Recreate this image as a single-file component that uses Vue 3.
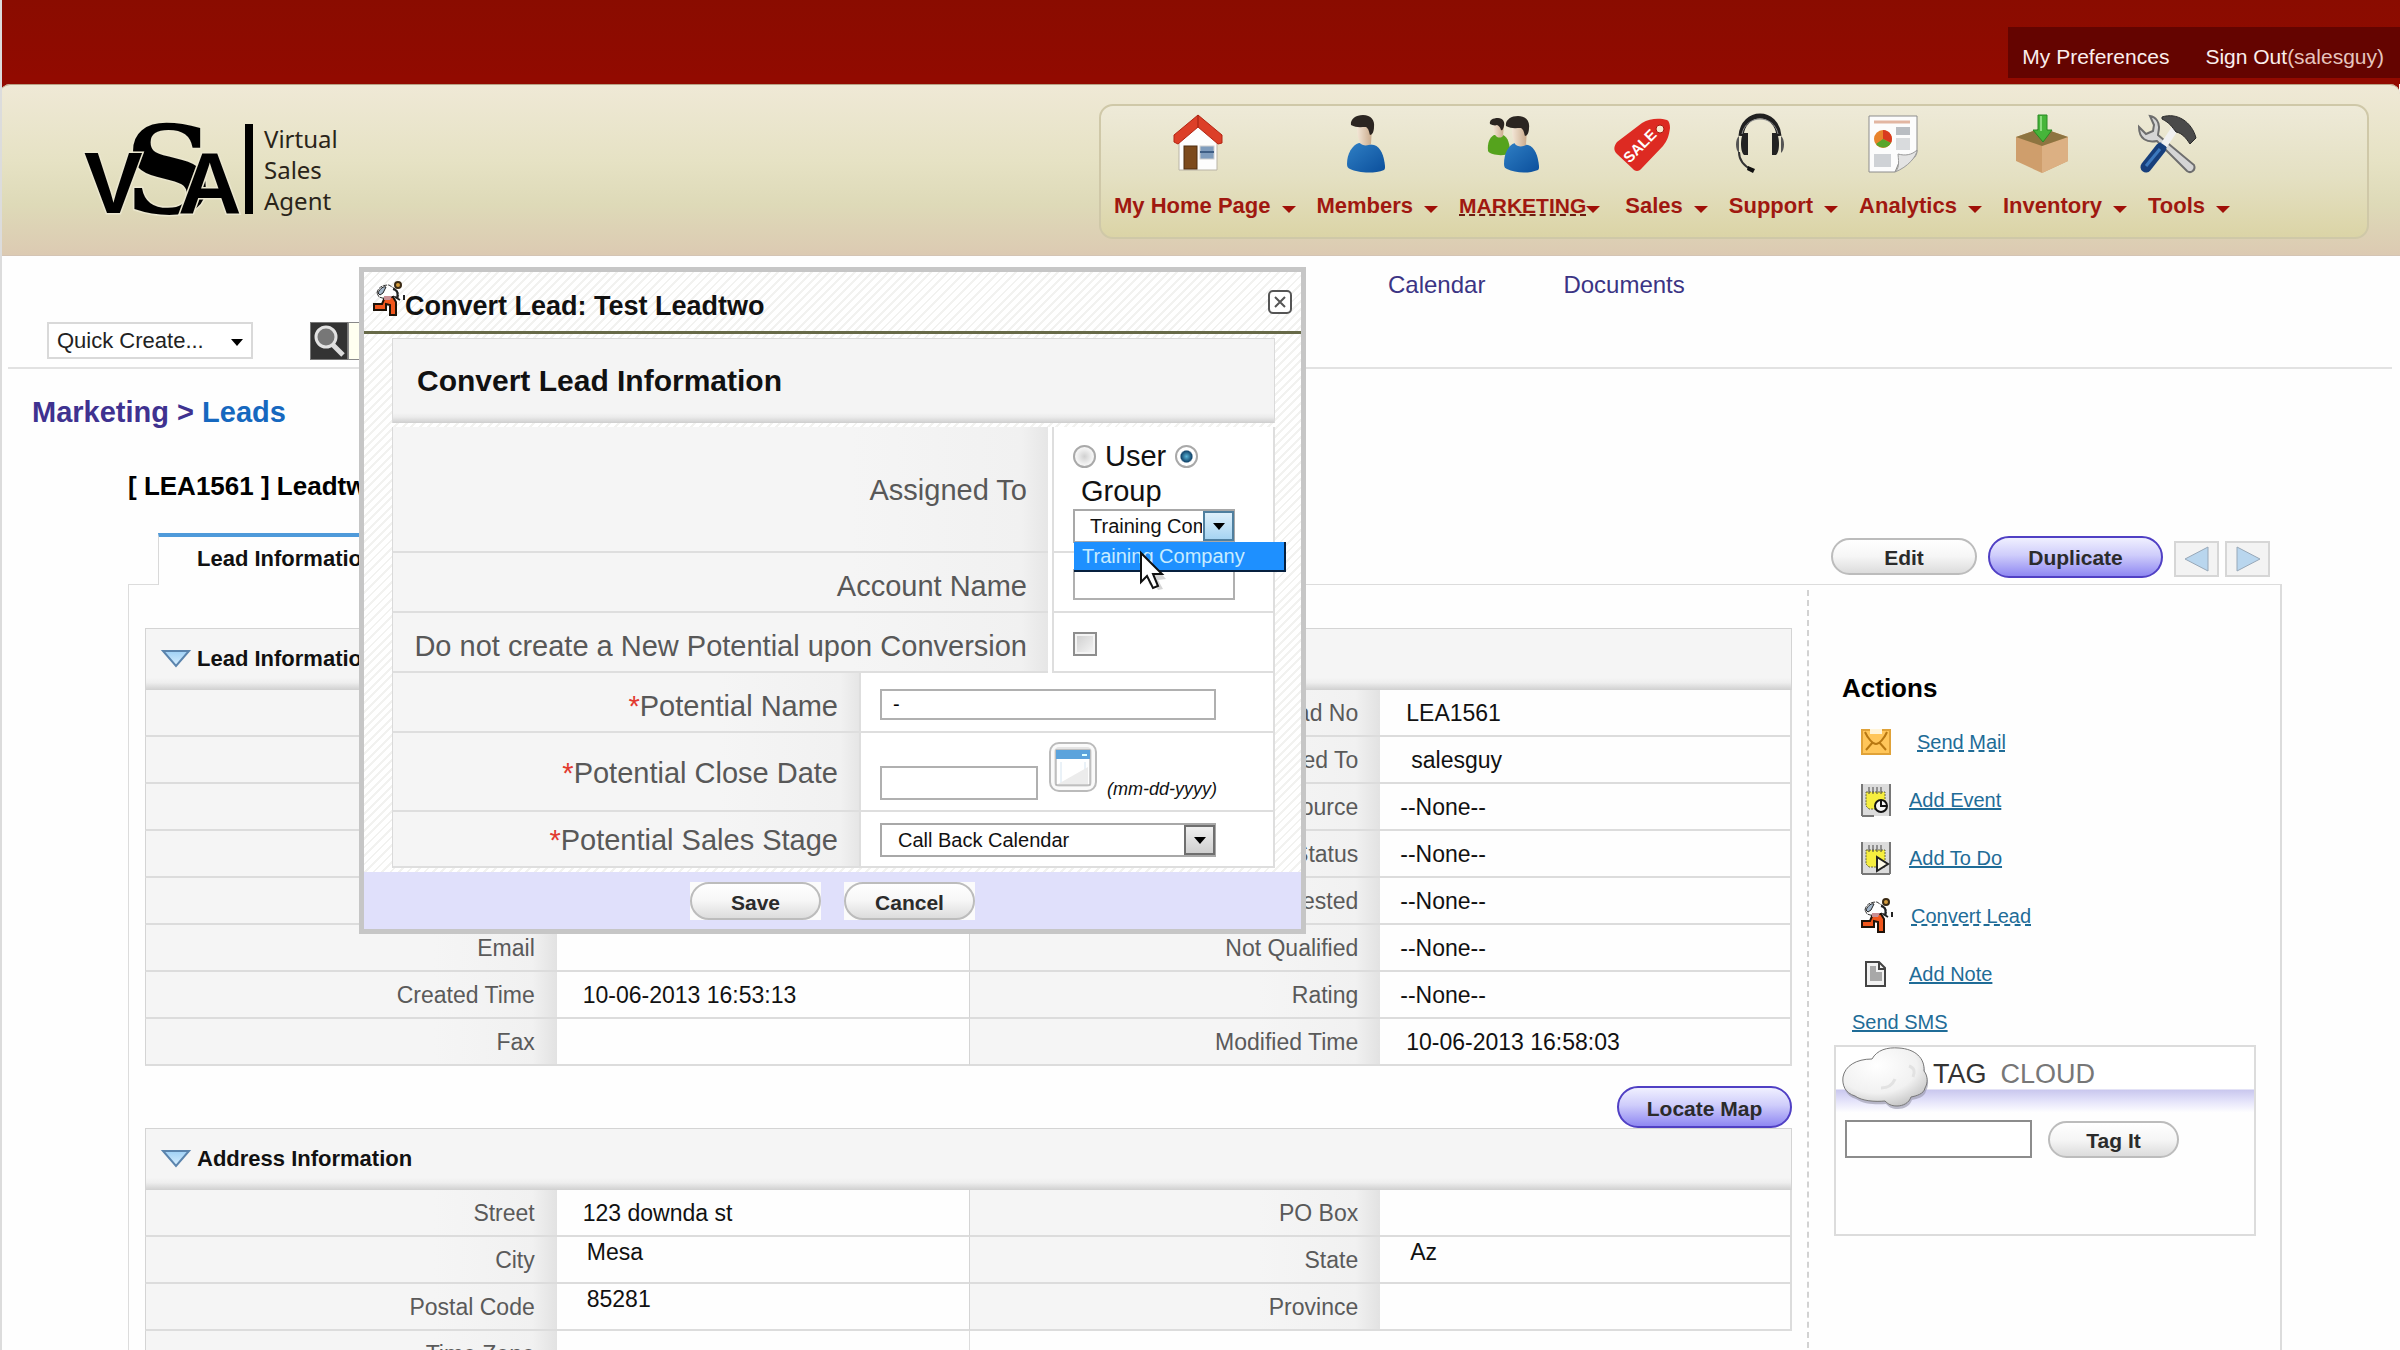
<script setup>
import { ref } from 'vue'

const navItems = [
  { label: 'My Home Page', icon: 'home', w: 50, shift: 7 },
  { label: 'Members', icon: 'member', w: 40, shift: 11 },
  { label: 'MARKETING', icon: 'members', w: 54, shift: 18, current: true },
  { label: 'Sales', icon: 'sale', w: 56, shift: 25 },
  { label: 'Support', icon: 'headset', w: 52, shift: 23 },
  { label: 'Analytics', icon: 'report', w: 50, shift: 28 },
  { label: 'Inventory', icon: 'box', w: 54, shift: 23 },
  { label: 'Tools', icon: 'tools', w: 60, shift: 22 }
]

const leadRows = [
  ['', '', 'Lead No', 'LEA1561'],
  ['', '', 'Assigned To', 'salesguy', 'inset'],
  ['', '', 'Lead Source', '--None--', 'outset'],
  ['', '', 'Lead Status', '--None--', 'outset'],
  ['', '', 'Interested', '--None--', 'outset'],
  ['Email', '', 'Not Qualified', '--None--', 'outset'],
  ['Created Time', '10-06-2013 16:53:13', 'Rating', '--None--', 'outset'],
  ['Fax', '', 'Modified Time', '10-06-2013 16:58:03']
]

const addressRows = [
  ['Street', '123 downda st', 'PO Box', ''],
  ['City', 'Mesa', 'State', 'Az', 'raised'],
  ['Postal Code', '85281', 'Province', '', 'raised']
]

const actions = [
  { label: 'Send Mail', icon: 'mail', dashed: true, wide: true },
  { label: 'Add Event', icon: 'event' },
  { label: 'Add To Do', icon: 'todo' },
  { label: 'Convert Lead', icon: 'runner', dashed: true },
  { label: 'Add Note', icon: 'note' }
]

const assignee = ref('group')
const group = ref('Training Company')
const stage = ref('Call Back Calendar')
const potentialName = ref('-')
const closeDate = ref('')
const account = ref('')
const skipPotential = ref(false)
const tag = ref('')
</script>

<template>
  <div class="page">
    <svg class="sprite" aria-hidden="true">
      <defs>
        <linearGradient id="g-blue" x1="0" y1="0" x2="1" y2="1">
          <stop offset="0" stop-color="#2f7fc4" /><stop offset="1" stop-color="#0b4f9c" />
        </linearGradient>
        <linearGradient id="g-skin" x1="0" y1="0" x2="1" y2="0">
          <stop offset="0" stop-color="#f3e6d6" /><stop offset="1" stop-color="#c9a98a" />
        </linearGradient>
        <linearGradient id="g-sky" x1="0" y1="0" x2="0" y2="1">
          <stop offset="0" stop-color="#9fd0f5" /><stop offset="1" stop-color="#d8efff" />
        </linearGradient>
        <radialGradient id="g-cloud" cx=".4" cy=".3" r=".8">
          <stop offset="0" stop-color="#ffffff" /><stop offset=".6" stop-color="#f1f1f1" /><stop offset="1" stop-color="#bdbdbd" />
        </radialGradient>
      </defs>
      <symbol id="i-home" viewBox="0 0 50 60">
        <path d="M6 26 25 8l19 18v30H6z" fill="#fdfdfd" stroke="#b9b4a6" />
        <path d="M1 21 25 1l24 20v8l-4 1L25 13 5 30l-4-2z" fill="#dc3f28" stroke="#b32512" />
        <path d="M25 1v12" stroke="#9d2010" />
        <rect x="11" y="32" width="13" height="23" fill="#7c4a1c" stroke="#4f2d0e" />
        <rect x="27" y="32" width="14" height="13" fill="#7f9cbd" stroke="#cfcfcf" />
        <path d="M27 38h14" stroke="#3f5f86" stroke-width="2" />
      </symbol>
      <symbol id="i-member" viewBox="0 0 40 60">
        <path d="M13 29C6 31 1 40 1 50c0 3 1 4 3 5 8 4 24 5 34 1 1-1 1-2 1-4-1-10-4-19-11-21z" fill="url(#g-blue)" />
        <path d="M11 14c0 8 2 12 3 15 2 3 8 3 11 1l1-17-11-5z" fill="url(#g-skin)" />
        <path d="M5 11C4 5 10 1 17 1c8 0 12 5 11 12 0 5-2 8-4 8-1-3-1-6-4-8-5 0-10 1-15-2z" fill="#2b2521" />
      </symbol>
      <symbol id="i-members" viewBox="0 0 54 60">
        <path d="M7 21C3 23 0 29 1 37c2 4 16 6 22 2 0-9-2-16-7-18z" fill="#55a31d" />
        <path d="M6 11c0 6 1 9 3 11 2 2 5 2 7 0l1-12z" fill="url(#g-skin)" />
        <path d="M3 10c-1-4 3-6 8-6 5 0 7 4 6 8-1 4-2 5-3 4-1-3-2-4-4-5-2 1-5 0-7-1z" fill="#2b2521" />
        <path d="M28 29c-7 2-11 11-11 21 0 3 1 4 3 5 8 4 21 5 31 1 1-1 1-2 1-4-1-10-4-19-11-21z" fill="url(#g-blue)" />
        <path d="M25 15c0 8 2 12 3 15 2 3 8 3 11 1l1-17-11-5z" fill="url(#g-skin)" />
        <path d="M19 12C18 6 24 2 31 2c8 0 12 5 11 12 0 5-2 8-4 8-1-3-1-6-4-8-5 0-10 1-15-2z" fill="#2b2521" />
      </symbol>
      <symbol id="i-sale" viewBox="0 0 56 60">
        <path d="M28 9C36 4 46 4 53 6c2 1 3 4 3 8-1 8-3 13-7 18L28 54c-3 4-7 4-10 0L3 40c-4-4-3-8 0-12z" fill="#dd2a22" />
        <circle cx="46" cy="15" r="4" fill="#f6e9d0" stroke="#a81710" />
        <text x="26" y="37" text-anchor="middle" transform="rotate(-45 26 32)" class="sale-text">SALE</text>
      </symbol>
      <symbol id="i-headset" viewBox="0 0 52 60">
        <path d="M7 22C8 9 17 2 26 2s18 7 19 20" fill="none" stroke="#202020" stroke-width="5" />
        <path d="M8 20C10 10 18 5 26 5s16 5 18 15" fill="none" stroke="#8b8b8b" />
        <path d="M10 19h4v22h-4c-4-3-4-19 0-22zM38 19h4c4 3 4 19 0 22h-4z" fill="#222" />
        <path d="M5 22c-4 3-4 14 0 17zM47 22c4 3 4 14 0 17z" fill="#555" />
        <path d="M5 38c0 9 5 14 13 18" fill="none" stroke="#333" stroke-width="2" />
        <path d="m14 52 7 3-2 4-6-3z" fill="#111" />
      </symbol>
      <symbol id="i-report" viewBox="0 0 50 60">
        <path d="M1 2h48v35c0 5-4 9-9 9h-8v0L27 58H1z" fill="#fcfcfc" stroke="#8c8c8c" />
        <path d="M27 58c4-4 4-8 3-18 7 2 14 1 19-4 0 6-9 17-22 22z" fill="#e3e3e3" stroke="#999" />
        <path d="M6 8h36" stroke="#e2b6a2" stroke-width="3" />
        <rect x="28" y="13" width="14" height="8" fill="#b9bdc2" />
        <rect x="28" y="24" width="14" height="12" fill="#d9dbdd" />
        <rect x="6" y="40" width="17" height="13" fill="#cfd2d6" />
        <circle cx="15" cy="25" r="9" fill="#e8832c" />
        <path d="M15 25V16a9 9 0 0 1 8 13z" fill="#d93a1f" />
        <path d="M15 25l8 4a9 9 0 0 1-15 1z" fill="#58a52b" />
      </symbol>
      <symbol id="i-box" viewBox="0 0 54 60">
        <path d="M1 23 27 14l26 9v24L27 59 1 47z" fill="#cf9e6c" />
        <path d="M27 32 53 23v24L27 59z" fill="#dcb083" />
        <path d="M1 23 27 14l26 9-26 9z" fill="#8d7440" />
        <path d="M23 1h9v15h5l-9 12-10-12h5z" fill="#46b53a" stroke="#2a8a24" />
        <path d="M25 2h2v15h-2z" fill="#8bdc7e" />
      </symbol>
      <symbol id="i-tools" viewBox="0 0 60 60">
        <path d="M13 2c6 1 9 6 9 11 0 4-1 6-1 8l36 30c2 5-3 9-7 6L20 27C10 29 2 25 2 13l7 7 7-3 1-6z" fill="#d5d5d5" stroke="#6e6e6e" stroke-width="2" />
        <path d="M24 34 9 53" stroke="#173f7c" stroke-width="11" stroke-linecap="round" />
        <path d="M23 35 9 52" stroke="#3c78bd" stroke-width="3" />
        <path d="M39 13 27 31" stroke="#f0f0f0" stroke-width="7" />
        <path d="M25 3c15-5 30 5 34 21l-6 6c-4-6-8-11-14-12-4-5-6-9-14-13z" fill="#4a4a4a" stroke="#2a2a2a" />
      </symbol>
      <symbol id="i-runner" viewBox="0 0 32 36">
        <path d="M4 12C5 6 10 4 16 4l6 4c3 2 4 4 3 9l-5-2-4 4-10-3z" fill="#fff" stroke="#333" stroke-dasharray="4 1" />
        <path d="M5 12c2-5 6-7 8-6l-3 6-3 2z" fill="#a3b6ca" stroke="#222" />
        <path d="M20 8c5 1 5 5 4 9" fill="none" stroke="#222" stroke-width="2" />
        <circle cx="25" cy="4" r="3" fill="#d29a3c" stroke="#3a2a14" stroke-width="2" />
        <path d="M12 16h8l3 5v13h-6V24l-4-1v6H1v-6h8z" fill="#f1561c" stroke="#1d1208" stroke-width="2" />
        <path d="M11 15h8l-2 4h-6z" fill="#c98f94" />
        <path d="m22 16 5 3M31 14v5" stroke="#222" stroke-width="2" />
      </symbol>
      <symbol id="i-mail" viewBox="0 0 30 34">
        <rect x="1" y="5" width="28" height="24" fill="#ffc65a" stroke="#e0a238" stroke-width="2" />
        <path d="M9 4h12v5H9z" fill="#fff4d9" />
        <path d="M4 7c3 7 8 12 11 12S23 14 26 7M5 25l7-8M25 25l-7-8" fill="none" stroke="#b87812" stroke-width="2" />
      </symbol>
      <symbol id="i-event" viewBox="0 0 30 34">
        <path d="M1 1h28v32H1z" fill="#dcdcdc" /><path d="M1 33V1M29 1v32M1 33h12" stroke="#777" stroke-width="2" />
        <path d="M5 9h19v17H8l-3-3z" fill="#f6ee3f" stroke="#6b6b3a" stroke-dasharray="2 1" />
        <path d="M8 4v7M12 4v7M16 4v7M20 4v7" stroke="#444" />
        <circle cx="20" cy="23" r="6" fill="#f5f5f5" stroke="#111" stroke-width="2" /><path d="M20 18v5h5" stroke="#111" stroke-width="2" fill="none" />
      </symbol>
      <symbol id="i-todo" viewBox="0 0 30 34">
        <path d="M1 1h28v32H1z" fill="#dcdcdc" /><path d="M1 33V1M29 1v32M1 33h28" stroke="#777" stroke-width="2" />
        <path d="M5 9h19v17H8l-3-3z" fill="#f6ee3f" stroke="#6b6b3a" stroke-dasharray="2 1" />
        <path d="M8 4v7M12 4v7M16 4v7M20 4v7" stroke="#444" />
        <path d="m16 16 11 7-11 7z" fill="#fffbe8" stroke="#222" stroke-width="2" />
      </symbol>
      <symbol id="i-note" viewBox="0 0 30 34">
        <path d="M5 5h13l6 6v18H5z" fill="#f2f2f2" stroke="#444" stroke-width="2" />
        <path d="M18 5v7h6" fill="none" stroke="#444" stroke-width="2" />
        <path d="M9 9h6v6h6v9H9z" fill="#a8a8a8" />
      </symbol>
    </svg>

    <header class="topbar">
      <div class="account-links">
        <a href="#prefs">My Preferences</a>
        <a href="#signout">Sign Out<span class="who">(salesguy)</span></a>
      </div>
    </header>

    <div class="banner">
      <a class="logo" href="#home" aria-label="Virtual Sales Agent">
        <svg width="172" height="110" viewBox="0 0 172 110" aria-hidden="true">
          <text x="41" y="99" class="mark serif">S</text>
          <text x="0" y="99" class="mark">V</text>
          <text x="94" y="99" class="mark">A</text>
          <rect x="161" y="10" width="8" height="90" fill="#000" />
        </svg>
        <span class="logo-words"><span>Virtual</span><span>Sales</span><span>Agent</span></span>
      </a>
      <nav class="main-nav">
        <a v-for="n in navItems" :key="n.label" href="#" class="nav-item" :class="{ current: n.current }">
          <svg :width="n.w" height="60" :style="{ marginLeft: -n.shift + 'px', marginRight: n.shift + 'px' }"><use :href="'#i-' + n.icon" /></svg>
          <span class="nav-label"><span class="nav-text">{{ n.label }}</span><i class="caret"></i></span>
        </a>
      </nav>
    </div>

    <nav class="sub-nav">
      <a href="#calendar">Calendar</a>
      <a href="#documents">Documents</a>
    </nav>

    <div class="quick-row">
      <div class="quick-select">
        <select aria-label="Quick Create"><option>Quick Create...</option></select>
        <i class="caret dark"></i>
      </div>
      <div class="search">
        <button type="button" aria-label="Search">
          <svg width="36" height="36" viewBox="0 0 36 36">
            <rect width="36" height="36" fill="#333" />
            <path d="m22 22 10 10" stroke="#ddd" stroke-width="5" />
            <circle cx="15" cy="14" r="10" fill="#777" stroke="#e2e2e2" stroke-width="3" />
          </svg>
        </button>
        <input type="text" aria-label="Search text" />
      </div>
    </div>

    <div class="crumbs"><a href="#marketing">Marketing</a> &gt; <a class="leaf" href="#leads">Leads</a></div>
    <h1 class="record-title">[ LEA1561 ] Leadtwo</h1>

    <div class="tab-row">
      <a class="tab" href="#lead">Lead Information</a>
      <div class="record-buttons">
        <button type="button" class="pill edit">Edit</button>
        <button type="button" class="pill violet duplicate">Duplicate</button>
        <div class="pager">
          <button type="button" aria-label="Previous"><svg width="26" height="26" viewBox="0 0 26 26"><path d="M1 13 24 1v24z" fill="#b9d6ee" stroke="#98a8b8" /></svg></button>
          <button type="button" aria-label="Next"><svg width="26" height="26" viewBox="0 0 26 26"><path d="M25 13 2 1v24z" fill="#b9d6ee" stroke="#98a8b8" /></svg></button>
        </div>
      </div>
    </div>

    <div class="panel">
      <main class="details">
        <h2 class="section-head"><svg width="28" height="18" viewBox="0 0 28 18"><path d="M1 1h26L14 16z" fill="url(#g-sky)" stroke="#5b84ad" stroke-width="2" /></svg>Lead Information</h2>
        <table class="fields">
          <tbody>
            <tr v-for="(r, i) in leadRows" :key="i">
              <th>{{ r[0] }}</th><td>{{ r[1] }}</td>
              <th>{{ r[2] }}</th><td :class="r[4]">{{ r[3] }}</td>
            </tr>
          </tbody>
        </table>
        <div class="map-row"><button type="button" class="pill violet locate">Locate Map</button></div>
        <h2 class="section-head"><svg width="28" height="18" viewBox="0 0 28 18"><path d="M1 1h26L14 16z" fill="url(#g-sky)" stroke="#5b84ad" stroke-width="2" /></svg>Address Information</h2>
        <table class="fields">
          <tbody>
            <tr v-for="r in addressRows" :key="r[0]">
              <th>{{ r[0] }}</th><td :class="r[4]">{{ r[1] }}</td>
              <th>{{ r[2] }}</th><td :class="r[4]">{{ r[3] }}</td>
            </tr>
            <tr><th>Time Zone</th><td></td><td class="blank" colspan="2"></td></tr>
          </tbody>
        </table>
      </main>

      <aside class="side">
        <h3>Actions</h3>
        <ul class="actions">
          <li v-for="a in actions" :key="a.label" :class="{ wide: a.wide }">
            <svg v-if="a.icon === 'runner'" width="32" height="36"><use href="#i-runner" /></svg>
            <svg v-else width="30" height="34"><use :href="'#i-' + a.icon" /></svg>
            <a href="#" :class="{ dashed: a.dashed }">{{ a.label }}</a>
          </li>
        </ul>
        <a class="sms" href="#sms">Send SMS</a>
        <section class="tag-cloud">
          <div class="tag-head">
            <svg width="90" height="64" viewBox="0 0 90 64" aria-hidden="true">
              <path d="M14 50C4 47 1 39 2 31 4 20 15 13 31 13 36 4 46 1 58 2c16 1 26 10 25 23 4 5 4 12 1 17-1 6-9 8-14 9-2 6-8 9-14 9-6 0-9-2-12-5-10 1-23 0-30-5z" transform="translate(1 3)" fill="#9696a8" opacity=".6" />
              <path d="M14 50C4 47 1 39 2 31 4 20 15 13 31 13 36 4 46 1 58 2c16 1 26 10 25 23 4 5 4 12 1 17-1 6-9 8-14 9-2 6-8 9-14 9-6 0-9-2-12-5-10 1-23 0-30-5z" fill="url(#g-cloud)" stroke="#777" />
              <path d="M40 42c8 0 12-4 14-9M68 20c6 2 6 6 4 11" fill="none" stroke="#e2e2e2" stroke-width="3" />
            </svg>
            <span>TAG</span><span class="dim">CLOUD</span>
          </div>
          <div class="tag-form">
            <input v-model="tag" type="text" aria-label="Tag" />
            <button type="button" class="pill tag-it">Tag It</button>
          </div>
        </section>
      </aside>
    </div>

    <form class="dialog" role="dialog" aria-labelledby="dialog-title" @submit.prevent>
      <div class="dialog-head">
        <svg width="32" height="36" aria-hidden="true"><use href="#i-runner" /></svg>
        <h2 id="dialog-title">Convert Lead: Test Leadtwo</h2>
        <button type="button" class="close" aria-label="Close">
          <svg width="24" height="24" viewBox="0 0 24 24"><rect x="1" y="1" width="22" height="22" rx="4" fill="#fff" stroke="#555" stroke-width="2" /><path d="m7 7 10 10M17 7 7 17" stroke="#555" stroke-width="2" /></svg>
        </button>
      </div>
      <div class="dialog-body">
        <h3 class="form-head">Convert Lead Information</h3>
        <div class="form-row assigned">
          <span class="form-label">Assigned To</span>
          <div class="form-value">
            <div class="radio-line"><input id="to-user" v-model="assignee" type="radio" value="user" /><label for="to-user">User</label><input id="to-group" v-model="assignee" type="radio" value="group" /></div>
            <label class="group-label" for="to-group">Group</label>
            <div class="combo group-combo open">
              <select v-model="group" aria-label="Group"><option>Training Company</option></select>
              <span class="combo-btn"><i class="caret dark"></i></span>
              <ul class="options"><li>Training Company</li></ul>
              <svg class="cursor" width="28" height="40" viewBox="0 0 28 40"><path d="m6 5 20 22-8 1 5 9-5 1-5-9-4 4z" fill="#999" opacity=".4" /><path d="M1 1v29l6-6 6 12 5-2-5-12h9z" fill="#fff" stroke="#111" stroke-width="2" /></svg>
            </div>
          </div>
        </div>
        <div class="form-row">
          <label class="form-label" for="account">Account Name</label>
          <div class="form-value"><input id="account" v-model="account" class="text short" type="text" /></div>
        </div>
        <div class="form-row">
          <label class="form-label" for="skip">Do not create a New Potential upon Conversion</label>
          <div class="form-value"><input id="skip" v-model="skipPotential" type="checkbox" /></div>
        </div>
        <div class="form-row even">
          <label class="form-label" for="pname"><b>*</b>Potential Name</label>
          <div class="form-value"><input id="pname" v-model="potentialName" class="text" type="text" /></div>
        </div>
        <div class="form-row even date-row">
          <label class="form-label" for="pdate"><b>*</b>Potential Close Date</label>
          <div class="form-value">
            <input id="pdate" v-model="closeDate" class="text date" type="text" />
            <button type="button" class="cal" aria-label="Pick date">
              <svg width="48" height="50" viewBox="0 0 48 50"><rect x="1" y="1" width="46" height="48" rx="9" fill="#fafafa" stroke="#bbb" stroke-width="2" /><rect x="5" y="5" width="38" height="40" rx="5" fill="#e4e4e4" /><rect x="7" y="8" width="34" height="35" fill="#fff" stroke="#999" /><rect x="7" y="8" width="34" height="9" fill="#5ba3dc" /><path d="M33 13h5" stroke="#dff" stroke-width="2" /><path d="M12 20v22M36 20v22" stroke="#d5e4f0" /><path d="M9 42 39 25v17z" fill="#ececec" /></svg>
            </button>
            <em>(mm-dd-yyyy)</em>
          </div>
        </div>
        <div class="form-row even stage-row">
          <label class="form-label" for="stage"><b>*</b>Potential Sales Stage</label>
          <div class="form-value">
            <div class="combo">
              <select id="stage" v-model="stage"><option>Call Back Calendar</option></select>
              <span class="combo-btn"><i class="caret dark"></i></span>
            </div>
          </div>
        </div>
      </div>
      <div class="dialog-foot">
        <span class="btn-plate"><button type="submit" class="pill">Save</button></span>
        <span class="btn-plate"><button type="button" class="pill">Cancel</button></span>
      </div>
    </form>
  </div>
</template>

<style>
body {
  background: #fefefe;
}
</style>

<style scoped>
* {
  box-sizing: border-box;
}
.page {
  position: relative;
  height: 100vh;
  overflow: hidden;
  border-left: 2px solid #dcdcdc;
  font-family: "Liberation Sans", Arial, sans-serif;
  font-size: 23px;
  color: #111;
}
h1, h2, h3, ul {
  margin: 0;
  padding: 0;
  list-style: none;
}
a {
  color: inherit;
  text-decoration: none;
}
button, input, select {
  font-family: inherit;
  margin: 0;
}
button {
  padding: 0;
  border: 0;
  background: none;
}
svg {
  display: block;
  flex: none;
  overflow: visible;
}
symbol {
  overflow: visible;
}
.sprite {
  position: absolute;
  width: 0;
  height: 0;
}
.sale-text {
  font: bold 15px "Liberation Sans", sans-serif;
  fill: #fff;
}
.caret {
  flex: none;
  width: 0;
  height: 0;
  border: 7px solid transparent;
  border-top-color: #a01008;
  border-bottom: 0;
}
.caret.dark {
  border-width: 7px 6px 0;
  border-top-color: #000;
}

/* header */
.topbar {
  display: flex;
  justify-content: flex-end;
  align-items: flex-end;
  height: 84px;
  margin-left: -2px;
  padding-bottom: 6px;
  background: linear-gradient(#8a0c00, #920a00);
}
.account-links {
  display: flex;
  gap: 36px;
  height: 51px;
  padding: 4px 16px 0 14px;
  line-height: 51px;
  font-size: 21px;
  color: #fbeeec;
  background: #640400;
}
.who {
  color: #e6c4be;
}
.banner {
  display: flex;
  justify-content: space-between;
  height: 172px;
  margin-left: -2px;
  padding: 19px 31px 0 84px;
  border-top: 1px solid #b9a184;
  border-bottom: 1px solid #d4c4b4;
  border-radius: 10px 10px 0 0;
  background: linear-gradient(#efe9d6, #e6e2c4 45%, #dedab8 70%, #dccab2);
  box-shadow: 0 -10px 0 -1px #920a00;
}
.logo {
  display: flex;
  gap: 8px;
  padding-top: 10px;
}
.mark {
  font: bold 88px "Liberation Sans", sans-serif;
  fill: #000;
  stroke: #ebe7cf;
  stroke-width: 3px;
  paint-order: stroke;
}
.mark.serif {
  font: bold 122px "DejaVu Serif", serif;
}
.logo-words {
  display: flex;
  flex-direction: column;
  padding-top: 9px;
  font: 24px/31px "Noto Sans", sans-serif;
  color: #2a2419;
}
.main-nav {
  display: flex;
  gap: 21px;
  width: 1270px;
  height: 135px;
  padding: 8px 13px 0;
  border: 2px solid #cfc8a8;
  border-radius: 14px;
  background: linear-gradient(#eeead8, #e4e0c2 55%, #dbd4a6);
}
.nav-item {
  display: flex;
  flex-direction: column;
  align-items: center;
  gap: 19px;
}
.nav-label {
  display: flex;
  align-items: center;
  gap: 11px;
  font-weight: bold;
  font-size: 22px;
  line-height: 26px;
  color: #a01810;
}
.nav-label .caret {
  margin-top: 6px;
}
.current .nav-label {
  gap: 0;
  padding-right: 4px;
}
.current .nav-text {
  font-size: 21px;
  text-decoration: underline dashed 2px #6d1a10;
}
.sub-nav {
  display: flex;
  gap: 78px;
  padding-left: 1386px;
  font-size: 24px;
  line-height: 58px;
  color: #3b3484;
}
.quick-row {
  display: flex;
  align-items: center;
  height: 55px;
  margin: 0 8px 0 6px;
  padding: 0 0 0 39px;
  border-bottom: 2px solid #e2e2e2;
}
.quick-select {
  position: relative;
  width: 206px;
}
.quick-select select {
  appearance: none;
  width: 100%;
  height: 37px;
  padding: 0 8px;
  border: 2px solid #d9d9d9;
  background: #fff;
  font-size: 22px;
  color: #222;
}
.quick-select .caret {
  position: absolute;
  right: 10px;
  top: 17px;
}
.search {
  display: flex;
  margin-left: 57px;
}
.search button {
  border: 1px solid #777;
}
.search input {
  width: 200px;
  border: 1px solid #888;
  background: #fffff0;
}
.crumbs {
  margin: 23px 0 0 30px;
  font-weight: bold;
  font-size: 29px;
  line-height: 40px;
  color: #3f3290;
}
.crumbs .leaf {
  color: #1668bf;
}
.record-title {
  margin: 38px 0 31px 126px;
  font-size: 26px;
  line-height: 32px;
  color: #000;
}

/* record */
.tab-row {
  display: flex;
  justify-content: space-between;
  height: 51px;
  margin: 0 118px 0 126px;
  padding: 0 12px 0 30px;
}
.tab {
  height: 52px;
  padding: 10px 39px 0 38px;
  border: solid #d9d9d9;
  border-width: 4px 1px 0;
  border-top-color: #4f9ada;
  background: #fefefe;
  font-weight: bold;
  font-size: 22px;
  line-height: 24px;
  z-index: 1;
}
.record-buttons {
  display: flex;
  align-items: center;
  gap: 11px;
  padding-bottom: 4px;
}
.pill {
  height: 37px;
  padding-top: 3px;
  border: 2px solid #bcbcbc;
  border-radius: 22px;
  background: linear-gradient(#fff, #f6f6f6 50%, #dcdcdc);
  font-weight: bold;
  font-size: 21px;
  color: #2b2b2b;
}
.edit {
  width: 146px;
}
.violet {
  height: 42px;
  border-color: #5040c4;
  background: linear-gradient(#f0f0ff, #cfcdfb 45%, #8f88f2);
}
.duplicate {
  width: 175px;
}
.pager {
  display: flex;
  gap: 6px;
}
.pager button {
  display: flex;
  align-items: center;
  justify-content: center;
  width: 45px;
  height: 36px;
  margin-top: 5px;
  border: 2px solid #d6d6d6;
  background: #f3f3f3;
}
.panel {
  display: flex;
  margin: 0 118px 0 126px;
  border: solid #dcdcdc;
  border-width: 1px 2px 0 1px;
}
.details {
  flex: 1;
  padding: 43px 15px 0 16px;
}
.section-head {
  display: flex;
  align-items: center;
  gap: 7px;
  height: 62px;
  padding: 0 16px 1px;
  border: 1px solid #d4d4d4;
  border-bottom: 0;
  background: linear-gradient(#f5f5f5 80%, #eee 88%, #d0d0d0);
  font-size: 22px;
}
.fields {
  width: 100%;
  table-layout: fixed;
  border-spacing: 0;
}
.fields th, .fields td {
  height: 47px;
  padding: 0;
  border-bottom: 2px solid #dcdcdc;
  line-height: 26px;
}
.fields th {
  padding-right: 22px;
  border-left: 1px solid #d4d4d4;
  background: linear-gradient(90deg, #f5f5f5 70%, #f1f1f1 94%, #e2e2e2);
  font-weight: normal;
  text-align: right;
  color: #5a5a5a;
}
.fields td {
  padding-left: 26px;
}
.fields td:last-child {
  border-right: 2px solid #dcdcdc;
}
.fields td.inset {
  padding-left: 31px;
}
.fields td.outset {
  padding-left: 20px;
}
.fields td.raised {
  padding: 0 0 15px 30px;
}
.fields td.blank {
  border-color: transparent;
  border-left: 1px solid #dcdcdc;
}
.map-row {
  display: flex;
  justify-content: flex-end;
  align-items: flex-end;
  height: 62px;
}
.locate {
  width: 175px;
}
.side {
  width: 473px;
  margin-top: 5px;
  padding: 82px 24px 120px 25px;
  border-left: 2px dashed #d2d2d2;
}
.side h3 {
  margin-left: 8px;
  font-size: 26px;
  line-height: 32px;
  color: #000;
}
.actions {
  margin: 9px 0 0 27px;
  font-size: 20px;
}
.actions li {
  display: flex;
  align-items: center;
  gap: 18px;
  height: 58px;
}
.actions li.wide {
  gap: 26px;
}
.actions a, .sms {
  color: #1f6c97;
  line-height: 24px;
  text-decoration: underline;
  text-decoration-thickness: 2px;
}
.actions a.dashed {
  text-decoration-style: dashed;
}
.sms {
  display: block;
  margin: 7px 0 11px 18px;
  font-size: 20px;
}
.tag-cloud {
  height: 191px;
  border: 2px solid #dcdcdc;
}
.tag-head {
  display: flex;
  align-items: center;
  gap: 14px;
  height: 66px;
  padding: 0 5px 12px;
  background: linear-gradient(#fff 42px, #c9c7ee 43px, #e4e3fa 54px, #fff 66px);
  font-size: 27px;
  color: #333;
}
.tag-head svg {
  margin: 8px -12px 0 0;
}
.tag-head .dim {
  color: #777;
}
.tag-form {
  display: flex;
  align-items: center;
  gap: 16px;
  padding: 7px 9px;
}
.tag-form input {
  width: 187px;
  height: 38px;
  border: 2px solid #8c8c8c;
}
.tag-it {
  width: 131px;
}

/* dialog */
.dialog {
  position: absolute;
  z-index: 2;
  left: 357px;
  top: 267px;
  width: 947px;
  border: 5px solid #c6c6c6;
  background: repeating-linear-gradient(135deg, #fff 0 4px, #f2f2f0 4px 6px);
}
.dialog-head {
  display: flex;
  align-items: flex-start;
  height: 62px;
  padding: 9px 9px 0 9px;
  border-bottom: 3px solid #676a48;
}
.dialog-head h2 {
  flex: 1;
  padding-top: 10px;
  font-size: 27px;
  line-height: 31px;
}
.close {
  margin-top: 9px;
}
.dialog-body {
  padding: 4px 26px 4px 28px;
}
.form-head {
  height: 85px;
  margin-bottom: 4px;
  padding: 25px 24px 0;
  border: 1px solid #dadada;
  border-bottom: 0;
  background: linear-gradient(#f4f4f4 88%, #ebebeb 93%, #cecece);
  font-size: 30px;
  line-height: 34px;
}
.form-row {
  display: grid;
  grid-template-columns: 656px 1fr;
  column-gap: 4px;
  height: 60px;
  background: #fff;
}
.form-row.even {
  grid-template-columns: 467px 1fr;
  column-gap: 0;
}
.form-row.assigned {
  height: 126px;
}
.form-row.date-row {
  height: 79px;
}
.form-row.stage-row {
  height: 56px;
}
.form-label {
  display: flex;
  align-items: center;
  justify-content: flex-end;
  padding-right: 21px;
  padding-top: 8px;
  border-left: 1px solid #dadada;
  border-bottom: 2px solid #dedede;
  background: linear-gradient(90deg, #f5f5f5 70%, #f1f1f1 96%, #e6e6e6);
  font-size: 29px;
  white-space: nowrap;
  color: #585858;
}
.assigned .form-label {
  padding-top: 2px;
}
.date-row .form-label, .stage-row .form-label {
  padding-top: 3px;
}
.form-label b {
  font-weight: normal;
  color: #e23a30;
}
.form-value {
  display: flex;
  align-items: center;
  padding: 4px 19px 0;
  border: solid #dedede;
  border-width: 0 2px 2px;
  background: #fff;
}
.assigned .form-value {
  display: block;
  padding-top: 12px;
  font-size: 29px;
}
.stage-row .form-value {
  padding-top: 2px;
}
.radio-line {
  display: flex;
  align-items: center;
  gap: 9px;
  line-height: 35px;
}
.group-label {
  display: block;
  padding-left: 8px;
  line-height: 35px;
}
input[type="radio"] {
  appearance: none;
  width: 23px;
  height: 23px;
  border: 2px solid #a9a9a9;
  border-radius: 50%;
  background: radial-gradient(#d0d0d0, #f3f3f3 60%, #fff);
}
input[type="radio"]:checked {
  background: radial-gradient(circle at 50% 50%, #5ab5d8, #14486f 40%, #fff 50%);
}
input[type="checkbox"] {
  appearance: none;
  width: 24px;
  height: 24px;
  border: 2px solid #8e8e8e;
  background: linear-gradient(135deg, #ccc, #f8f8f8);
  box-shadow: inset 0 0 0 2px #f4f4f4;
}
.text {
  width: 336px;
  height: 31px;
  padding: 0 11px;
  border: 2px solid #b0b0b0;
  background: #fff;
  font-size: 20px;
}
.text.short {
  width: 162px;
}
.text.date {
  width: 158px;
  height: 34px;
}
.date-row .form-value {
  align-items: flex-end;
  padding-bottom: 10px;
}
.cal {
  margin: 0 10px 8px 11px;
}
.date-row em {
  font-size: 18px;
}
.combo {
  position: relative;
  width: 336px;
}
.combo select {
  appearance: none;
  display: block;
  width: 100%;
  height: 34px;
  padding: 0 31px 0 16px;
  border: 2px solid #a8a8a8;
  border-radius: 0;
  background: #fff;
  font-size: 20px;
  color: #111;
}
.combo-btn {
  position: absolute;
  top: 2px;
  right: 1px;
  display: flex;
  align-items: center;
  justify-content: center;
  width: 31px;
  height: 30px;
  border: 2px solid #6f6f6f;
  background: linear-gradient(#f0f0f0, #cfcfcf);
}
.group-combo {
  width: 162px;
}
.open select {
  padding-left: 15px;
}
.open .combo-btn {
  border-color: #4f7f9f;
  background: linear-gradient(#dff0fb, #a6d4f2);
}
.options {
  position: absolute;
  top: 33px;
  left: 1px;
  z-index: 1;
  width: 212px;
  padding: 0 8px;
  border: solid #06203f;
  border-width: 0 2px 2px 0;
  background: #1e90ff;
  font-size: 20px;
  line-height: 28px;
  color: #c8ecff;
}
.cursor {
  position: absolute;
  z-index: 2;
  left: 67px;
  top: 43px;
}
.dialog-foot {
  display: flex;
  justify-content: center;
  gap: 23px;
  height: 57px;
  padding: 10px 0 0 0;
  background: #e0e0fb;
}
.btn-plate {
  width: 131px;
  height: 38px;
  background: #fbfbfb;
}
.btn-plate .pill {
  width: 100%;
  height: 38px;
}
</style>
